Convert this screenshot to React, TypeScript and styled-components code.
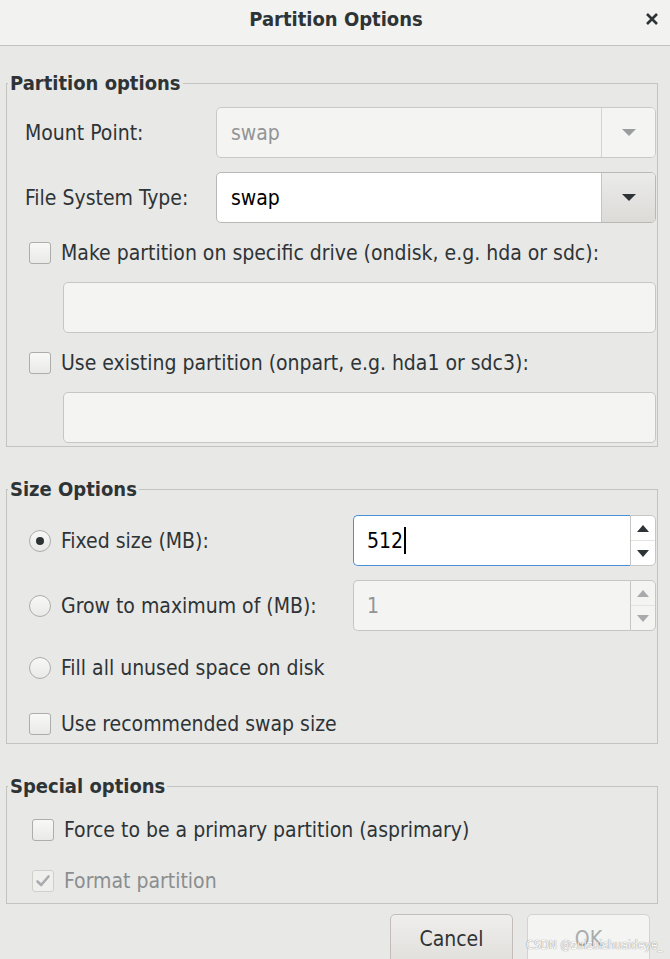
import React from "react";
import styled, { createGlobalStyle } from "styled-components";

const Global = createGlobalStyle`
  html, body { margin: 0; padding: 0; background: #e8e8e7; }
  body {
    font-family: "DejaVu Sans Condensed", "DejaVu Sans", sans-serif;
    font-stretch: condensed;
    color: #2e3436;
  }
  * { box-sizing: border-box; }
`;

const Window = styled.div`
  width: 670px;
  height: 959px;
  overflow: hidden;
  position: relative;
  background: #e8e8e7;
  font-size: 21px;
  line-height: 24px;
`;

const TitleBar = styled.div`
  height: 46px;
  background: #f2f2f1;
  border-bottom: 1px solid #c2c2c0;
  display: grid;
  grid-template-columns: 1fr auto 1fr;
  align-items: start;
  padding: 7px 6px 0 8px;
`;

const Title = styled.div`
  grid-column: 2;
  font-weight: bold;
  font-size: 20px;
  color: #2e3436;
`;

const Close = styled.div`
  grid-column: 3;
  justify-self: end;
  width: 24px;
  height: 24px;
  display: flex;
  align-items: center;
  justify-content: center;
`;

const Frame = styled.fieldset<{ $mt: number }>`
  margin: ${(p) => p.$mt}px 12px 0 6px;
  padding: 0;
  border: 1px solid #c3c3c0;
  min-width: 0;
`;

const Legend = styled.legend`
  padding: 0 2px;
  margin-left: 1px;
  font-weight: bold;
  font-size: 20px;
  line-height: 24px;
`;

const FrameBody = styled.div<{ $pt: number; $pb: number }>`
  display: flex;
  flex-direction: column;
  padding: ${(p) => p.$pt}px 1px ${(p) => p.$pb}px 18px;
`;

const FormRow = styled.div<{ $label: number; $mt?: number }>`
  display: grid;
  grid-template-columns: ${(p) => p.$label}px 1fr;
  align-items: center;
  height: 51px;
  margin-top: ${(p) => p.$mt ?? 0}px;
`;

const Label = styled.span<{ $disabled?: boolean }>`
  color: ${(p) => (p.$disabled ? "#8b8e8f" : "#2e3436")};
  white-space: nowrap;
`;

const Combo = styled.div<{ $disabled?: boolean }>`
  display: flex;
  height: 51px;
  border: 1px solid ${(p) => (p.$disabled ? "#c9c9c6" : "#b8b8b5")};
  border-radius: 5px;
  overflow: hidden;
  background: ${(p) => (p.$disabled ? "#f4f4f3" : "#ffffff")};
`;

const ComboText = styled.div<{ $disabled?: boolean }>`
  flex: 1;
  display: flex;
  align-items: center;
  padding-left: 14px;
  color: ${(p) => (p.$disabled ? "#929595" : "#000000")};
`;

const ComboButton = styled.div<{ $disabled?: boolean }>`
  width: 54px;
  display: flex;
  align-items: center;
  justify-content: center;
  border-left: 1px solid ${(p) => (p.$disabled ? "#d3d3d0" : "#c4c4c1")};
  background: ${(p) =>
    p.$disabled ? "#f4f4f3" : "linear-gradient(#ebebea, #dcdbd8)"};
`;

const Arrow = styled.div<{ $up?: boolean; $color: string; $w: number; $h: number }>`
  width: 0;
  height: 0;
  border-left: ${(p) => p.$w / 2}px solid transparent;
  border-right: ${(p) => p.$w / 2}px solid transparent;
  ${(p) =>
    p.$up
      ? `border-bottom: ${p.$h}px solid ${p.$color};`
      : `border-top: ${p.$h}px solid ${p.$color};`}
`;

const CheckRow = styled.label<{ $mt?: number; $indent?: number }>`
  display: flex;
  align-items: center;
  height: 28px;
  margin-top: ${(p) => p.$mt ?? 0}px;
  padding-left: ${(p) => p.$indent ?? 4}px;
  gap: 10px;
`;

const Box = styled.span<{ $disabled?: boolean }>`
  width: 22px;
  height: 22px;
  flex: none;
  border: 1px solid ${(p) => (p.$disabled ? "#cfcfcc" : "#adadaa")};
  border-radius: 3px;
  background: ${(p) =>
    p.$disabled ? "#efefee" : "linear-gradient(#f8f8f7, #e9e9e8)"};
  display: flex;
  align-items: center;
  justify-content: center;
`;

const Radio = styled.span<{ $on?: boolean }>`
  width: 22px;
  height: 22px;
  flex: none;
  border: 1px solid #adadaa;
  border-radius: 50%;
  background: linear-gradient(#f8f8f7, #e9e9e8);
  display: flex;
  align-items: center;
  justify-content: center;
  &::after {
    content: "";
    width: 8px;
    height: 8px;
    border-radius: 50%;
    background: ${(p) => (p.$on ? "#2e3436" : "transparent")};
  }
`;

const Entry = styled.div<{ $mt?: number }>`
  height: 51px;
  margin-top: ${(p) => p.$mt ?? 0}px;
  margin-left: 38px;
  border: 1px solid #c6c6c3;
  border-radius: 5px;
  background: #f4f4f3;
`;

const Spin = styled.div`
  display: flex;
  height: 51px;
`;

const SpinText = styled.div<{ $focus?: boolean }>`
  flex: 1;
  display: flex;
  align-items: center;
  padding-left: 13px;
  border: 1px solid ${(p) => (p.$focus ? "#4a90d9" : "#c6c6c3")};
  border-right: none;
  border-radius: 5px 0 0 5px;
  background: ${(p) => (p.$focus ? "#ffffff" : "#f4f4f3")};
  color: ${(p) => (p.$focus ? "#000000" : "#929595")};
`;

const SpinButtons = styled.div<{ $disabled?: boolean }>`
  width: 26px;
  display: flex;
  flex-direction: column;
  border: 1px solid #c6c6c3;
  border-radius: 0 5px 5px 0;
  background: ${(p) => (p.$disabled ? "#f4f4f3" : "#ffffff")};
`;

const SpinBtn = styled.div<{ $top?: boolean }>`
  flex: 1;
  display: flex;
  align-items: center;
  justify-content: center;
  ${(p) => (p.$top ? "border-bottom: 1px solid #e4e4e2;" : "")}
`;

const Caret = styled.span`
  display: inline-block;
  width: 1.5px;
  height: 27px;
  background: #000;
  margin-left: 1px;
`;

const ButtonRow = styled.div`
  display: flex;
  justify-content: flex-end;
  gap: 14px;
  margin-top: 10px;
  padding-right: 20px;
`;

const Button = styled.div<{ $disabled?: boolean }>`
  width: 123px;
  height: 50px;
  border: 1px solid ${(p) => (p.$disabled ? "#d6d3cf" : "#c2bdb8")};
  border-radius: 5px;
  background: ${(p) =>
    p.$disabled ? "#f4f4f3" : "linear-gradient(#efeeec, #e1dfdc)"};
  color: ${(p) => (p.$disabled ? "#a9acad" : "#2e3436")};
  display: flex;
  align-items: center;
  justify-content: center;
`;

const Watermark = styled.div`
  position: absolute;
  right: 7px;
  bottom: 7px;
  font-family: "DejaVu Sans Condensed", "DejaVu Sans", sans-serif;
  font-size: 12px;
  line-height: 14px;
  color: #fbfbfb;
  text-shadow: 0 0 1px rgba(0, 0, 0, 0.6);
`;

const Check = ({ color }: { color: string }) => (
  <svg width="16" height="16" viewBox="0 0 16 16">
    <path d="M2.5 8.5 L6.2 12 L13.5 3.5" fill="none" stroke={color} strokeWidth="2.6" strokeLinecap="round" strokeLinejoin="round" />
  </svg>
);

export default function App() {
  return (
    <>
      <Global />
      <Window>
        <TitleBar>
          <Title>Partition Options</Title>
          <Close>
            <svg width="14" height="14" viewBox="0 0 14 14">
              <path d="M2 2 L12 12 M12 2 L2 12" stroke="#2e3436" strokeWidth="2.6" strokeLinecap="butt" />
            </svg>
          </Close>
        </TitleBar>

        <Frame $mt={25}>
          <Legend>Partition options</Legend>
          <FrameBody $pt={12} $pb={3}>
            <FormRow $label={191}>
              <Label>Mount Point:</Label>
              <Combo $disabled>
                <ComboText $disabled>swap</ComboText>
                <ComboButton $disabled>
                  <Arrow $color="#9a9c9d" $w={14} $h={7} />
                </ComboButton>
              </Combo>
            </FormRow>
            <FormRow $label={191} $mt={14}>
              <Label>File System Type:</Label>
              <Combo>
                <ComboText>swap</ComboText>
                <ComboButton>
                  <Arrow $color="#2e3436" $w={14} $h={7} />
                </ComboButton>
              </Combo>
            </FormRow>
            <CheckRow $mt={16}>
              <Box />
              <Label>Make partition on specific drive (ondisk, e.g. hda or sdc):</Label>
            </CheckRow>
            <Entry $mt={15} />
            <CheckRow $mt={16}>
              <Box />
              <Label>Use existing partition (onpart, e.g. hda1 or sdc3):</Label>
            </CheckRow>
            <Entry $mt={15} />
          </FrameBody>
        </Frame>

        <Frame $mt={30}>
          <Legend>Size Options</Legend>
          <FrameBody $pt={14} $pb={5}>
            <FormRow $label={328}>
              <CheckRow>
                <Radio $on />
                <Label>Fixed size (MB):</Label>
              </CheckRow>
              <Spin>
                <SpinText $focus>
                  512<Caret />
                </SpinText>
                <SpinButtons>
                  <SpinBtn $top>
                    <Arrow $up $color="#2e3436" $w={13} $h={7} />
                  </SpinBtn>
                  <SpinBtn>
                    <Arrow $color="#2e3436" $w={13} $h={7} />
                  </SpinBtn>
                </SpinButtons>
              </Spin>
            </FormRow>
            <FormRow $label={328} $mt={14}>
              <CheckRow>
                <Radio />
                <Label>Grow to maximum of (MB):</Label>
              </CheckRow>
              <Spin>
                <SpinText>1</SpinText>
                <SpinButtons $disabled>
                  <SpinBtn $top>
                    <Arrow $up $color="#a8aaab" $w={13} $h={7} />
                  </SpinBtn>
                  <SpinBtn>
                    <Arrow $color="#a8aaab" $w={13} $h={7} />
                  </SpinBtn>
                </SpinButtons>
              </Spin>
            </FormRow>
            <CheckRow $mt={23}>
              <Radio />
              <Label>Fill all unused space on disk</Label>
            </CheckRow>
            <CheckRow $mt={28}>
              <Box />
              <Label>Use recommended swap size</Label>
            </CheckRow>
          </FrameBody>
        </Frame>

        <Frame $mt={30}>
          <Legend>Special options</Legend>
          <FrameBody $pt={18} $pb={8}>
            <CheckRow $indent={7}>
              <Box />
              <Label>Force to be a primary partition (asprimary)</Label>
            </CheckRow>
            <CheckRow $mt={23} $indent={7}>
              <Box $disabled>
                <Check color="#a9abac" />
              </Box>
              <Label $disabled>Format partition</Label>
            </CheckRow>
          </FrameBody>
        </Frame>

        <ButtonRow>
          <Button>Cancel</Button>
          <Button $disabled>OK</Button>
        </ButtonRow>

        <Watermark>CSDN @zuizuishuaideye_</Watermark>
      </Window>
    </>
  );
}
